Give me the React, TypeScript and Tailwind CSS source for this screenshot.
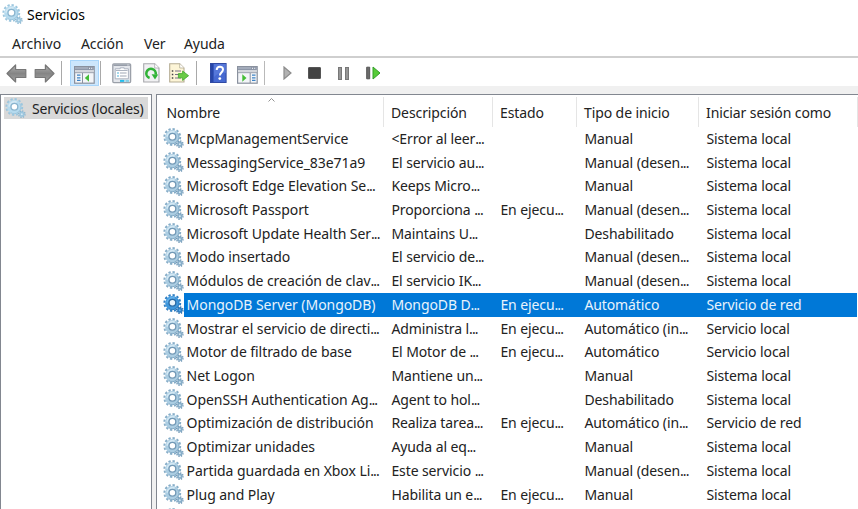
import React from "react";

type Row = { name: string; desc: string; state?: string; start: string; logon: string };

const rows: Row[] = [
  { name: "McpManagementService", desc: "<Error al leer...", start: "Manual", logon: "Sistema local" },
  { name: "MessagingService_83e71a9", desc: "El servicio au...", start: "Manual (desen...", logon: "Sistema local" },
  { name: "Microsoft Edge Elevation Se...", desc: "Keeps Micro...", start: "Manual", logon: "Sistema local" },
  { name: "Microsoft Passport", desc: "Proporciona ...", state: "En ejecu...", start: "Manual (desen...", logon: "Sistema local" },
  { name: "Microsoft Update Health Ser...", desc: "Maintains U...", start: "Deshabilitado", logon: "Sistema local" },
  { name: "Modo insertado", desc: "El servicio de...", start: "Manual (desen...", logon: "Sistema local" },
  { name: "Módulos de creación de clav...", desc: "El servicio IK...", start: "Manual (desen...", logon: "Sistema local" },
  { name: "MongoDB Server (MongoDB)", desc: "MongoDB D...", state: "En ejecu...", start: "Automático", logon: "Servicio de red" },
  { name: "Mostrar el servicio de directi...", desc: "Administra l...", state: "En ejecu...", start: "Automático (in...", logon: "Servicio local" },
  { name: "Motor de filtrado de base", desc: "El Motor de ...", state: "En ejecu...", start: "Automático", logon: "Servicio local" },
  { name: "Net Logon", desc: "Mantiene un...", start: "Manual", logon: "Sistema local" },
  { name: "OpenSSH Authentication Ag...", desc: "Agent to hol...", start: "Deshabilitado", logon: "Sistema local" },
  { name: "Optimización de distribución", desc: "Realiza tarea...", state: "En ejecu...", start: "Automático (in...", logon: "Servicio de red" },
  { name: "Optimizar unidades", desc: "Ayuda al eq...", start: "Manual", logon: "Sistema local" },
  { name: "Partida guardada en Xbox Li...", desc: "Este servicio ...", start: "Manual (desen...", logon: "Sistema local" },
  { name: "Plug and Play", desc: "Habilita un e...", state: "En ejecu...", start: "Manual", logon: "Sistema local" },
];

const SELECTED = 7;

function Gears({ selected = false, pale = false }: { selected?: boolean; pale?: boolean }) {
  const body = selected ? "#3f97dc" : pale ? "#b5daee" : "#abcde2";
  const teeth = selected ? "#2f7fc4" : pale ? "#9cc6de" : "#86adc8";
  const edge = selected ? "#2b6ba5" : pale ? "#8ab4ce" : "#7299b6";
  const light = selected ? "#62b0ea" : "#d3e8f4";
  return (
    <svg width="21" height="21" viewBox="0 0 21 21" className="block shrink-0">
      <circle cx="9.3" cy="9" r="7.9" fill="none" stroke={teeth} strokeWidth="2" strokeDasharray="2.3 1.836" />
      <circle cx="9.3" cy="9" r="7.1" fill={body} />
      <path d="M14.8 5.5a6.6 6.6 0 0 1-9.2 9" fill="none" stroke={teeth} strokeWidth="1" />
      <path d="M4.1 8.6a5.3 5.3 0 0 1 7.6-4.3" fill="none" stroke={light} strokeWidth="1.8" />
      <circle cx="9.4" cy="8.8" r="3.4" fill={selected ? "#e8f4fc" : "#fff"} stroke={edge} strokeWidth="1.3" />
      <circle cx="16.8" cy="16.2" r="3.1" fill="none" stroke={edge} strokeWidth="1.6" strokeDasharray="1.25 1.18" />
      <circle cx="16.8" cy="16.2" r="2.6" fill={teeth} />
      <circle cx="16.8" cy="16.2" r="1" fill={light} />
    </svg>
  );
}

function Arrow({ flip = false }: { flip?: boolean }) {
  return (
    <svg width="21" height="19" viewBox="0 0 21 19" className={flip ? "block shrink-0 -scale-x-100" : "block shrink-0"}>
      <defs>
        <linearGradient id={flip ? "fwd" : "back"} x1="0" y1="0" x2="0" y2="1">
          <stop offset="0" stopColor="#b0b0b0" />
          <stop offset="0.5" stopColor="#858585" />
          <stop offset="1" stopColor="#a3a3a3" />
        </linearGradient>
      </defs>
      <path d="M1 9.5 9.6 1v4.5h10.2v8H9.6V18Z" fill={flip ? "url(#fwd)" : "url(#back)"} stroke="#777" strokeWidth="1.2" strokeLinejoin="round" />
    </svg>
  );
}

function WindowIcon({ tree = false }: { tree?: boolean }) {
  return (
    <svg width="21" height="18" viewBox="0 0 21 18" className="block shrink-0">
      <rect x="0.6" y="0.6" width="19.6" height="16.6" fill="#f3f5f8" stroke="#8a919e" strokeWidth="1.2" />
      <rect x="1" y="1" width="18.8" height="3" fill="#8d97a8" />
      <path d="M1 2h13" stroke="#c5ccd7" strokeWidth="0.8" />
      <path d="M15 2.3h1M17.2 2.3h1" stroke="#fff" strokeWidth="1" />
      <rect x="1.2" y="4" width="18.4" height="2.6" fill="#d4d7dd" />
      <path d="M1 6.7h19" stroke="#8a919e" strokeWidth="0.8" />
      {tree ? (
        <>
          <path d="M8.5 7v10" stroke="#8a919e" strokeWidth="1" />
          <path d="M3 9.2h3.5M3 11.8h3.5M3 14.4h3.5" stroke="#3d83c5" strokeWidth="1.3" />
          <path d="M15 8.2v7.6L10.8 12Z" fill="#43bd35" />
        </>
      ) : (
        <>
          <path d="M13.2 7v10" stroke="#8a919e" strokeWidth="1" />
          <path d="M15 9.2h3.5M15 11.8h3.5M15 14.4h3.5" stroke="#3d83c5" strokeWidth="1.3" />
          <path d="M5.3 8.2v7.6L9.5 12Z" fill="#43bd35" />
        </>
      )}
    </svg>
  );
}

function PropertiesIcon() {
  return (
    <svg width="20" height="21" viewBox="0 0 20 21" className="block shrink-0">
      <rect x="0.8" y="0.8" width="17.8" height="18.8" rx="1" fill="#e3e6eb" stroke="#9ba0a9" strokeWidth="1.3" />
      <path d="M1.5 2.2h16.3" stroke="#8a919e" strokeWidth="1.3" />
      <path d="M15.5 2h1" stroke="#fff" />
      <path d="M3.2 5.8h5v-1h4v1h4.2v10H3.2Z" fill="#fff" stroke="#a5adba" strokeWidth="0.9" />
      <path d="M4 7.5h11.6" stroke="#a5adba" strokeWidth="0.9" />
      <path d="M5 10h2M5 13h2" stroke="#4db3da" strokeWidth="1.2" />
      <path d="M8 10h6.6M8 13h6.6" stroke="#a0a8b5" strokeWidth="1.1" />
      <path d="M8 17.9h4.3" stroke="#23bdeb" strokeWidth="2" />
      <path d="M13.5 17.9H17" stroke="#85cfe5" strokeWidth="2" />
    </svg>
  );
}

function RefreshIcon() {
  return (
    <svg width="17" height="20" viewBox="0 0 17 20" className="block shrink-0">
      <path d="M.7.7h11L16 5v14H.7Z" fill="#f1f1f3" stroke="#a7a8ac" strokeWidth="1.1" />
      <path d="M11.7.7V5H16" fill="#fff" stroke="#a7a8ac" strokeWidth="0.8" />
      <path d="M6.6 15A4.7 4.7 0 1 1 12.6 11.6" fill="none" stroke="#31b337" strokeWidth="2.6" />
      <path d="m8.6 11.2 6.6.4-3.2 4.8Z" fill="#31b337" />
    </svg>
  );
}

function ExportIcon() {
  return (
    <svg width="21" height="20" viewBox="0 0 21 20" className="block shrink-0">
      <path d="M.7.7h10L15 5v14H.7Z" fill="#fdf5d7" stroke="#b6ad94" strokeWidth="1.1" />
      <path d="M10.7.7V5H15" fill="#fff" stroke="#b6ad94" strokeWidth="0.8" />
      <path d="M2.8 8h1.5M2.8 11.5h1.5M2.8 15h1.5" stroke="#444" strokeWidth="1.5" />
      <path d="M6 8h6M6 11.5h4M6 15h6" stroke="#777186" strokeWidth="1.2" />
      <path d="M9.4 10.6h4.2V8l6 4.7-6 4.7v-2.6H9.4Z" fill="#69ca45" stroke="#40a82e" strokeWidth="0.8" />
    </svg>
  );
}

function HelpIcon() {
  return (
    <svg width="17" height="20" viewBox="0 0 17 20" className="block shrink-0">
      <rect x="0.5" y="0.5" width="15.6" height="19" fill="#4669d1" stroke="#304aa4" />
      <path d="M1 1h2.5v18H1Z" fill="#2746a8" />
      <path d="M4 1h12v9Q9 9 4 14Z" fill="#6386e2" opacity="0.5" />
      <path d="M6.7 7c0-4.2 6.4-4.1 6.3-.6 0 2.8-3.1 3.3-3.1 6" fill="none" stroke="#fff" strokeWidth="2" />
      <circle cx="9.8" cy="15.6" r="1.4" fill="#fff" />
    </svg>
  );
}

/* Cell text; a trailing ellipsis is set tighter than the words before it. */
function Label({ text = "" }: { text?: string }) {
  const cut = text.endsWith("...");
  return (
    <>
      {cut ? text.slice(0, -3) : text}
      {cut && <span className="tracking-[-0.9px]">...</span>}
    </>
  );
}

function ColumnHeader({ label, className, sorted = false }: { label: string; className: string; sorted?: boolean }) {
  return (
    <div className={`relative flex h-[30px] shrink-0 items-center border-r border-[#e5e5e5] pt-px ${className}`}>
      {sorted && (
        <svg width="7" height="4" viewBox="0 0 7 4" className="absolute top-px left-[111px]">
          <path d="m.5 3.5 3-3 3 3" fill="none" stroke="#888" strokeWidth="0.9" />
        </svg>
      )}
      {label}
    </div>
  );
}

export default function App() {
  return (
    <div className="flex h-[509px] w-[858px] flex-col overflow-hidden bg-white font-['Noto_Sans','Open_Sans',sans-serif] text-[14px] leading-none tracking-[-0.1px] whitespace-pre text-[#222]">
      <div className="flex h-[30px] shrink-0 items-center pl-[2px]">
        <div className="-mt-px"><Gears pale /></div>
        <span className="pl-[4px] tracking-[0.05px] text-black">Servicios</span>
      </div>
      <div className="flex h-[26px] shrink-0 items-center pt-[2px] pl-[12px]">
        <span className="w-[69px] tracking-[0.03px]">Archivo</span>
        <span className="w-[63px]">Acción</span>
        <span className="w-[40px]">Ver</span>
        <span>Ayuda</span>
      </div>
      <div className="flex h-[30px] shrink-0 items-center border-t-2 border-[#cfcfcf] pt-[2px] pl-[6px]">
        <Arrow />
        <div className="ml-[7px]"><Arrow flip /></div>
        <div className="ml-[6px] h-[24px] w-px bg-[#a9a9a9]" />
        <div className="ml-[8px] flex h-[26px] w-[29px] items-center justify-center border border-[#a8d5fa] bg-[#cce6fc] pt-[3px]"><WindowIcon tree /></div>
        <div className="ml-[1px] h-[24px] w-px bg-[#a9a9a9]" />
        <div className="ml-[11px]"><PropertiesIcon /></div>
        <div className="ml-[11px]"><RefreshIcon /></div>
        <div className="ml-[9px]"><ExportIcon /></div>
        <div className="ml-[6px] h-[24px] w-px bg-[#a9a9a9]" />
        <div className="ml-[13px]"><HelpIcon /></div>
        <div className="ml-[10px] pt-[3px]"><WindowIcon /></div>
        <div className="ml-[6px] h-[24px] w-px bg-[#b9b9b9]" />
        <svg width="9" height="14" viewBox="0 0 9 14" className="ml-[18px] block">
          <path d="M1 1v12l7-6Z" fill="#b2b2b2" stroke="#8c8c8c" strokeWidth="1.2" />
        </svg>
        <div className="ml-[16px] h-[12px] w-[13px] rounded-[1px] border border-[#555] bg-[#434343]" />
        <div className="ml-[17px] flex gap-[3px]">
          <div className="h-[13px] w-[4px] border border-[#777] bg-[#969696]" />
          <div className="h-[13px] w-[4px] border border-[#777] bg-[#969696]" />
        </div>
        <svg width="15" height="14" viewBox="0 0 15 14" className="ml-[17px] block">
          <path d="M.7 1.2h3v11.6h-3Z" fill="#6b6b6b" stroke="#565656" />
          <path d="M7 1v12L14 7Z" fill="#56cb37" stroke="#339e29" />
        </svg>
      </div>
      <div className="flex min-h-0 grow bg-[#f0f0f0] pt-[8px]">
        <div className="w-[152px] shrink-0 border-x border-t border-[#828790] bg-white pt-[2px]">
          <div className="ml-[3px] flex h-[22px] w-[144px] items-center bg-[#d9d9d9] pl-[1px]">
            <Gears pale />
            <span className="pt-[2px] pl-[6px] tracking-[-0.15px]">Servicios (locales)</span>
          </div>
        </div>
        <div className="ml-[4px] flex grow flex-col overflow-hidden border-t border-l border-[#828790] bg-white">
          <div className="flex shrink-0 pt-[2px]">
            <ColumnHeader label="Nombre" className="w-[227px] pl-[9.5px]" sorted />
            <ColumnHeader label="Descripción" className="w-[109px] pl-[7px]" />
            <ColumnHeader label="Estado" className="w-[84px] pl-[7px]" />
            <ColumnHeader label="Tipo de inicio" className="w-[122px] pl-[7px]" />
            <ColumnHeader label="Iniciar sesión como" className="w-[159px] pl-[7px]" />
          </div>
          {rows.map((row, i) => (
            <div key={row.name} className="flex h-[23.73px] shrink-0 items-center pl-[6px]">
              <div className="w-[21px] shrink-0"><Gears selected={i === SELECTED} /></div>
              <div className={i === SELECTED ? "flex h-full w-[673px] items-center bg-[#0078d7] text-[#e8f3fc]" : "flex h-full w-[673px] items-center"}>
                <span className="w-[207.4px] shrink-0 pl-[2.6px] tracking-[-0.06px]"><Label text={row.name} /></span>
                <span className="w-[109px] shrink-0"><Label text={row.desc} /></span>
                <span className="w-[84px] shrink-0"><Label text={row.state} /></span>
                <span className="w-[122px] shrink-0"><Label text={row.start} /></span>
                <span>{row.logon}</span>
              </div>
            </div>
          ))}
          <div className="flex h-[24px] shrink-0 items-center pl-[6px]"><Gears /></div>
        </div>
      </div>
    </div>
  );
}
